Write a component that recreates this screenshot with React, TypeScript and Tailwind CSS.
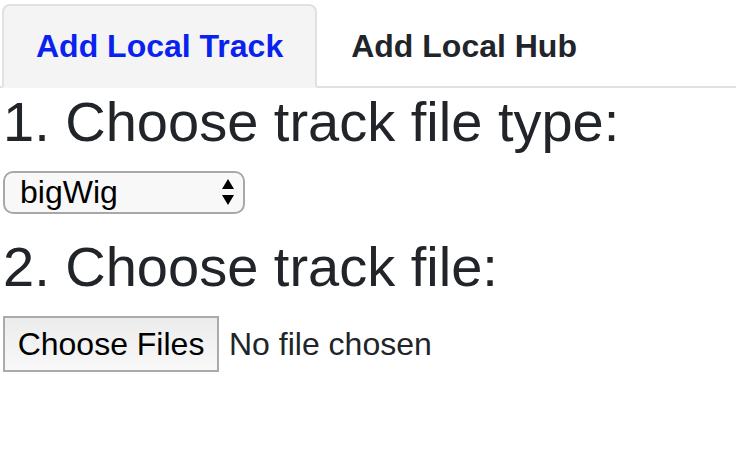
import React from "react";

const tabs = ["Add Local Track", "Add Local Hub"];

const SelectArrows = () => (
  <svg
    className="pointer-events-none absolute right-[11px] top-[8px]"
    width="12"
    height="27"
    viewBox="0 0 12 27"
    fill="#000">
    <path d="M6 0 L12 10 L0 10 Z" />
    <path d="M0 16 L12 16 L6 26 Z" />
  </svg>
);

export default function App() {
  const [active, setActive] = React.useState(0);
  const [fileType, setFileType] = React.useState("bigWig");

  return (
    <div
      className="w-[736px] h-[450px] bg-white text-[#212529] pt-[4px]"
      style={{ fontFamily: '"Liberation Sans", Arial, sans-serif' }}>
      {/* tab nav */}
      <div className="flex border-b-2 border-[#dee2e6] pl-[2px]">
        {tabs.map((label, i) => (
          <button
            key={label}
            onClick={() => setActive(i)}
            className={`-mb-[2px] border-2 rounded-t-[8px] px-[32px] py-[16px] text-[32px] leading-[48px] font-bold ${
              active === i
                ? "bg-[#f4f4f5] border-[#dee2e6] border-b-[#f4f4f5] text-[#0a22ef]"
                : "border-transparent text-[#212529]"
            }`}>
            {label}
          </button>
        ))}
      </div>

      <div className="pl-[3px]">
        <h3 className="text-[56px] leading-[67px] font-normal mb-[16px]">
          1. Choose track file type:
        </h3>
        <div className="relative w-[242px] h-[43px]">
          <select
            value={fileType}
            onChange={(e) => setFileType(e.target.value)}
            className="appearance-none w-full h-[43px] rounded-[10px] border-2 border-[#a8a8a8] bg-[#f8f8f8] pl-[15px] text-[32px] leading-[39px] text-black outline-none">
            <option value="bigWig">bigWig</option>
            <option value="bedGraph">bedGraph</option>
            <option value="bed">bed</option>
            <option value="bam">bam</option>
            <option value="hic">hic</option>
          </select>
          <SelectArrows />
        </div>

        <h3 className="mt-[19px] text-[56px] leading-[67px] font-normal mb-[16px]">
          2. Choose track file:
        </h3>
        <div className="flex items-center">
          <button className="h-[56px] w-[216px] border-2 border-[#aaaaaa] bg-gradient-to-b from-[#ececec] to-[#f8f8f8] text-[32px] text-black">
            Choose Files
          </button>
          <span className="ml-[10px] text-[32px]">No file chosen</span>
        </div>
      </div>
    </div>
  );
}
